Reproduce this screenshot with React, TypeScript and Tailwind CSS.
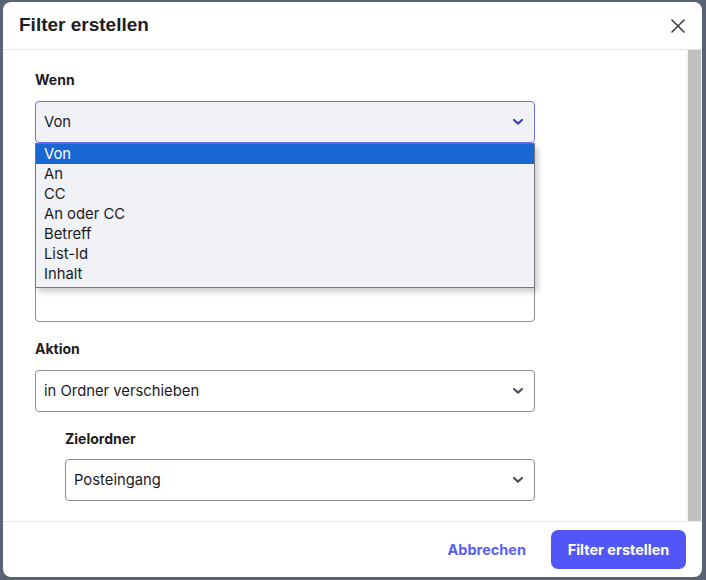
import React from "react";

const body = { fontFamily: "Inter, 'Open Sans', sans-serif" };

function Chevron({ color }: { color: string }) {
  return (
    <svg width="12" height="8" viewBox="0 0 12 8" fill="none">
      <path d="M2 2l4 3.6L10 2" stroke={color} strokeWidth="2.2" strokeLinecap="round" strokeLinejoin="round" />
    </svg>
  );
}

function SelectBox({ value, focused }: { value?: string; focused?: boolean }) {
  return (
    <div
      className={
        focused
          ? "flex h-[42px] items-center justify-between rounded-[4px] border border-[#6b6cf2] bg-[#f1f2f6] pl-[8px] pr-[10px]"
          : "flex h-[42px] items-center justify-between rounded-[4px] border border-[#8c9196] bg-white pl-[8px] pr-[10px]"
      }
    >
      <span className="text-[14.8px] text-[#1b1b1f]">{value}</span>
      <Chevron color={focused ? "#3f43b8" : "#4b5160"} />
    </div>
  );
}

const options = ["Von", "An", "CC", "An oder CC", "Betreff", "List-Id", "Inhalt"];

export default function App() {
  return (
    <div className="flex h-[580px] w-[706px] bg-[#5b6275] pb-[3px] pl-[3px] pr-[4px] pt-[2px]" style={body}>
      <div className="flex flex-1 flex-col overflow-hidden rounded-[8px] bg-white">
        {/* header */}
        <div className="flex h-[48px] shrink-0 items-center justify-between border-b border-[#e4e5e9] pl-[16px] pr-[16px]">
          <h1
            className="text-[19px] font-bold text-[#1d1d22]"
            style={{ fontFamily: "'Liberation Sans', Arial, sans-serif" }}
          >
            Filter erstellen
          </h1>
          <svg width="16" height="16" viewBox="0 0 16 16" fill="none">
            <path d="M2 2l12 12M14 2L2 14" stroke="#3c3f46" strokeWidth="1.6" strokeLinecap="round" />
          </svg>
        </div>

        {/* scrollable body */}
        <div className="flex min-h-0 flex-1">
          <div className="flex-1 pl-[32px] pt-[20px]">
            <div className="relative w-[500px]">
              <div className="text-[14px] font-bold leading-[20px] text-[#1d1d22]">Wenn</div>
              <div className="mt-[11px]">
                <SelectBox value="Von" focused />
              </div>
              {/* fields below the open list */}
              <div className="mt-[21px] h-[42px] rounded-[4px] border border-[#8c9196] bg-white" />
              <div className="mt-[74px] h-[42px] rounded-[4px] border border-[#8c9196] bg-white" />

              {/* open option list */}
              <div className="absolute left-0 top-[73px] w-[500px] border border-[#767676] bg-[#f1f2f6] pb-[3px] shadow-[3px_4px_6px_rgba(0,0,0,0.2)]">
                {options.map((o, i) => (
                  <div
                    key={o}
                    className={
                      i === 0
                        ? "h-[20px] bg-[#1967d2] pl-[8px] text-[14.8px] leading-[20px] text-white"
                        : "h-[20px] pl-[8px] text-[14.8px] leading-[20px] text-[#1b1b1f]"
                    }
                  >
                    {o}
                  </div>
                ))}
              </div>

              <div className="mt-[17px] text-[14px] font-bold leading-[20px] text-[#1d1d22]">Aktion</div>
              <div className="mt-[11px]">
                <SelectBox value="in Ordner verschieben" />
              </div>
              <div className="ml-[30px] mt-[17px]">
                <div className="text-[14px] font-bold leading-[20px] text-[#1d1d22]">Zielordner</div>
                <div className="mt-[10px]">
                  <SelectBox value="Posteingang" />
                </div>
              </div>
            </div>
          </div>
          {/* scrollbar */}
          <div className="flex w-[16px] shrink-0 bg-[#f4f4f4] pl-[2px] pr-[1px]">
            <div className="flex-1 bg-[#c1c1c1]" />
          </div>
        </div>

        {/* footer */}
        <div className="flex h-[56px] shrink-0 items-center justify-end gap-[25px] border-t border-[#e4e5e9] pr-[16px]">
          <button className="text-[14.5px] font-bold text-[#5b5ef6]">Abbrechen</button>
          <button className="h-[39px] w-[135px] rounded-[7px] bg-[#5356f7] text-[14.5px] font-bold text-white">
            Filter erstellen
          </button>
        </div>
      </div>
    </div>
  );
}
